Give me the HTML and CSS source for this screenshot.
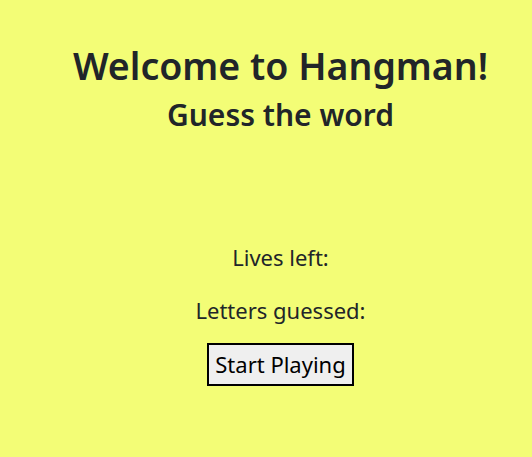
FILE: index.html
```html
<!DOCTYPE html>
<html>
<head>
<meta charset="utf-8">
<link rel="stylesheet" href="styles.css">
</head>
<body>
<div class="app">
  <h1 class="title">Welcome to Hangman!</h1>
  <h2 class="subtitle">Guess the word</h2>
  <div class="word"></div>
  <p class="info">Lives left:</p>
  <p class="info">Letters guessed:</p>
  <button class="start">Start Playing</button>
</div>
</body>
</html>
```
FILE: styles.css
```css
html, body {
  margin: 0;
  padding: 0;
  background: #f3fd76;
}
body {
  font-family: "Noto Sans", "Open Sans", sans-serif;
  color: #212529;
}
.app {
  display: flex;
  flex-direction: column;
  align-items: center;
  padding: 43px 0 0 29px;
  text-align: center;
}
.title {
  font-size: 37.5px;
  font-weight: 600;
  margin: 0;
  line-height: 46px;
}
.subtitle {
  font-size: 30px;
  font-weight: 600;
  margin: 8px 0 0;
  line-height: 36px;
}
.word {
  height: 108px;
}
.info {
  font-size: 22px;
  margin: 0 0 20px;
  line-height: 33px;
}
.info + .info {
  margin-bottom: 16px;
}
.start {
  font-family: "Noto Sans", sans-serif;
  font-size: 22px;
  line-height: 31px;
  color: #000;
  background: #efefef;
  border: 2px solid #000;
  padding: 4px 6px;
  border-radius: 0;
}
```
